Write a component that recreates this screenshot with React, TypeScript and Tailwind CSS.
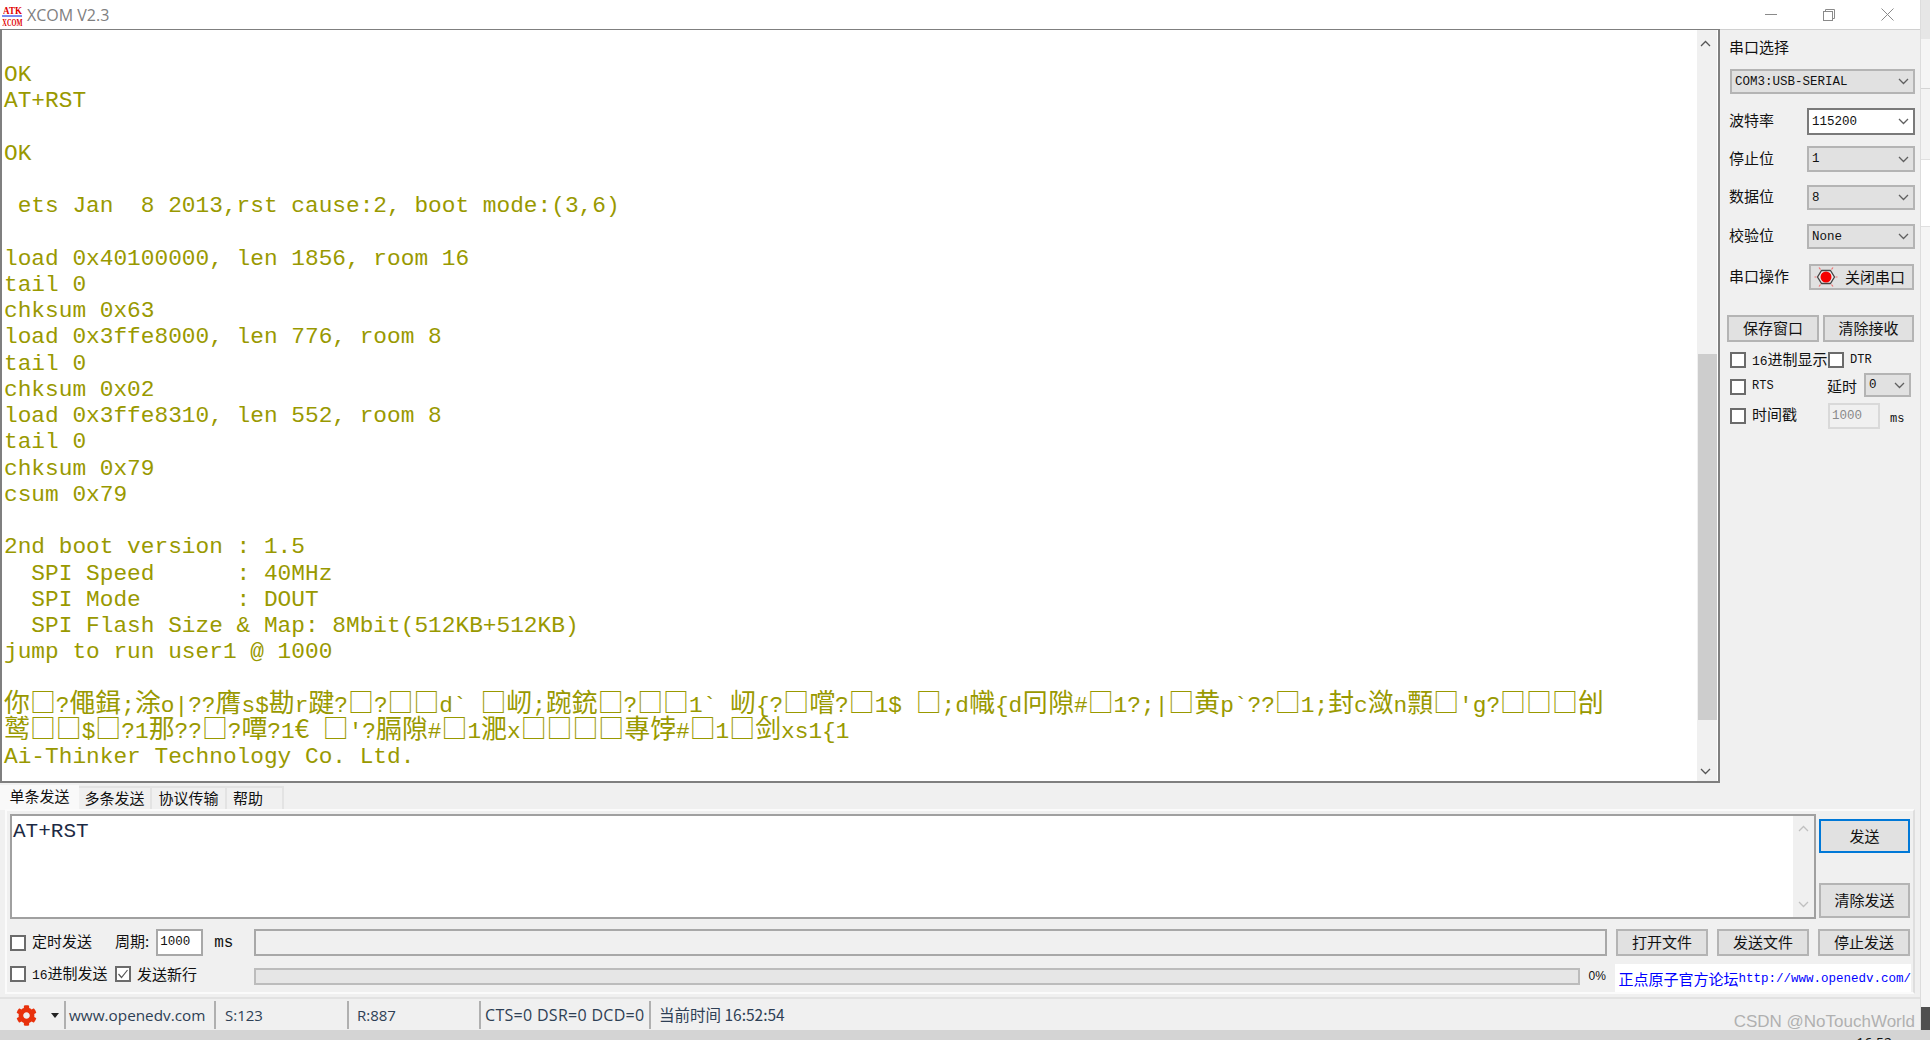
import { FaCog } from 'react-icons/fa';

const cjk = '"Noto Sans CJK SC"';

const termLines = [
  '',
  'OK',
  'AT+RST',
  '',
  'OK',
  '',
  ' ets Jan  8 2013,rst cause:2, boot mode:(3,6)',
  '',
  'load 0x40100000, len 1856, room 16',
  'tail 0',
  'chksum 0x63',
  'load 0x3ffe8000, len 776, room 8',
  'tail 0',
  'chksum 0x02',
  'load 0x3ffe8310, len 552, room 8',
  'tail 0',
  'chksum 0x79',
  'csum 0x79',
  '',
  '2nd boot version : 1.5',
  '  SPI Speed      : 40MHz',
  '  SPI Mode       : DOUT',
  '  SPI Flash Size & Map: 8Mbit(512KB+512KB)',
  'jump to run user1 @ 1000',
  '',
  '你□?僶鍓;涂o|??膺s$勘r踺?□?□□d` □屻;踠銃□?□□1` 屻{?□嚐?□1$ □;d幟{d冋隙#□1?;|□黄p`??□1;封c潋n顠□\'g?□□□刣',
  '鹫□□$□?1那??□?嘾?1€ □\'?膈隙#□1淝x□□□□專饽#□1□剑xs1{1',
  'Ai-Thinker Technology Co. Ltd.',
];

function TermLine({ text }: { text: string }) {
  const runs = text.split(/([^\x00-\x7f]+)/);
  // lines with wide characters sit lower because of the CJK font's metrics
  return (
    <div className={`h-[26.25px] whitespace-pre ${runs.length > 1 ? '-translate-y-[4px]' : ''}`}>
      {runs.map((r, i) =>
        i % 2 === 1 ? (
          <span key={i} className="inline-block font-['Noto_Sans_CJK_SC'] text-[25.9px] leading-[26px]">
            {r}
          </span>
        ) : (
          <span key={i}>{r}</span>
        ),
      )}
    </div>
  );
}

function Chevron({ up, color = '#606060' }: { up?: boolean; color?: string }) {
  return (
    <svg width="11" height="7" viewBox="0 0 11 7" fill="none" className="shrink-0">
      <polyline
        points={up ? '1,6 5.5,1.5 10,6' : '1,1 5.5,5.5 10,1'}
        stroke={color}
        strokeWidth="1.3"
      />
    </svg>
  );
}

function Combo({ value, white, cls }: { value: string; white?: boolean; cls: string }) {
  return (
    <div
      className={`flex items-center justify-between pl-[3px] pr-[4px] border-2 ${
        white ? 'bg-white border-[#7a7a7a]' : 'bg-[#e1e1e1] border-[#b4b4b4]'
      } font-['Liberation_Mono'] text-[12.5px] text-[#111] ${cls}`}
    >
      <span className="mt-[1px]">{value}</span>
      <Chevron />
    </div>
  );
}

function Btn({ label, cls }: { label: string; cls: string }) {
  return (
    <div
      className={`flex items-center justify-center bg-[#e1e1e1] border-2 border-[#b4b4b4] text-[15px] text-[#111] ${cls}`}
    >
      {label}
    </div>
  );
}

function Check({ checked, cls = '' }: { checked?: boolean; cls?: string }) {
  return (
    <div className={`w-[16px] h-[16px] shrink-0 bg-white border-2 border-[#6b6b6b] flex items-center justify-center ${cls}`}>
      {checked && (
        <svg width="12" height="12" viewBox="0 0 12 12" fill="none">
          <polyline points="1.5,6 4.5,9.5 10.5,2" stroke="#555" strokeWidth="1.2" />
        </svg>
      )}
    </div>
  );
}

function PanelRow({ label, children, cls }: { label: string; children: React.ReactNode; cls: string }) {
  return (
    <div className={`flex items-center justify-between text-[15px] text-[#111] ${cls}`}>
      <span className="-ml-[1px] mb-[2px]">{label}</span>
      {children}
    </div>
  );
}

function Logo() {
  return (
    <div className="w-[20px] h-[20px] mt-[2px] ml-[2px] flex flex-col items-center leading-none font-['Liberation_Serif'] font-bold text-[#e00000]">
      <span className="text-[10px] h-[9px] leading-[9px] scale-x-90 whitespace-nowrap">ATK</span>
      <span className="w-full h-[2px] bg-[#7a8cf0] shrink-0"></span>
      <span className="text-[11px] h-[9px] leading-[10px] scale-x-[0.58] whitespace-nowrap">XCOM</span>
    </div>
  );
}

function StatusCell({ text, cls }: { text: string; cls: string }) {
  return (
    <div className={`h-[28px] mt-[1px] flex items-center border-r-2 border-[#b0b0b0] whitespace-pre ${cls}`}>
      {text}
    </div>
  );
}

export default function App() {
  return (
    <div
      className="w-[1930px] h-[1040px] flex flex-col overflow-hidden bg-[#d4d4d4]"
      style={{ fontFamily: `${cjk}, sans-serif` }}
    >
      <div className="flex h-[1030px]">
        {/* window */}
        <div className="w-[1920px] h-full flex flex-col bg-[#f0f0f0]">
          {/* title bar */}
          <div className="h-[29px] shrink-0 bg-white flex items-center">
            <Logo />
            <span className="ml-[5px] font-['Open_Sans'] text-[16px] text-[#808080]">XCOM V2.3</span>
            <div className="ml-auto flex items-center pr-[3px]">
              <div className="w-[58px] h-[29px] flex items-center justify-center">
                <div className="w-[12px] h-px bg-[#8a8a8a]"></div>
              </div>
              <div className="w-[58px] h-[29px] flex items-center justify-center">
                <svg width="12" height="12" viewBox="0 0 12 12" fill="none" stroke="#8a8a8a">
                  <rect x="0.5" y="2.5" width="9" height="9" />
                  <path d="M2.5 2.5V0.5H11.5V9.5H9.5" />
                </svg>
              </div>
              <div className="w-[59px] h-[29px] flex items-center justify-center">
                <svg width="13" height="13" viewBox="0 0 13 13" stroke="#8a8a8a">
                  <path d="M0.5 0.5L12.5 12.5M12.5 0.5L0.5 12.5" />
                </svg>
              </div>
            </div>
          </div>

          {/* terminal + settings */}
          <div className="h-[754px] shrink-0 flex">
            <div className="w-[1720px] shrink-0 flex bg-white border-2 border-[#7f7f7f] border-t-[1.5px]">
              <div className="flex-1 min-w-0 pt-[5.5px] pl-[2px] font-['Liberation_Mono'] text-[22.8px] leading-[26.25px] text-[#999900]">
                {termLines.map((l, i) => (
                  <TermLine key={i} text={l} />
                ))}
              </div>
              <div className="w-[20px] shrink-0 mr-[1px] bg-[#f0f0f0] flex flex-col items-center">
                <div className="h-[26px] pr-[3px] flex items-center justify-center">
                  <Chevron up color="#555" />
                </div>
                <div className="mt-[298px] w-[19px] h-[366px] bg-[#cdcdcd]"></div>
                <div className="mt-auto h-[20px] pr-[3px] flex items-center justify-center">
                  <Chevron color="#555" />
                </div>
              </div>
            </div>

            <div className="flex-1 pl-[10px] pr-[5px] flex flex-col border-t border-[#d0d0d0]">
              <div className="mt-[7px] -ml-[1px] h-[20px] leading-[20px] text-[15px] text-[#111]">串口选择</div>
              <Combo value="COM3:USB-SERIAL" cls="mt-[12px] h-[25px]" />
              <PanelRow label="波特率" cls="mt-[14px] h-[27px]">
                <Combo value="115200" white cls="w-[108px] h-[27px]" />
              </PanelRow>
              <PanelRow label="停止位" cls="mt-[11px] h-[26px]">
                <Combo value="1" cls="w-[108px] h-[26px]" />
              </PanelRow>
              <PanelRow label="数据位" cls="mt-[13px] h-[25px]">
                <Combo value="8" cls="w-[108px] h-[25px]" />
              </PanelRow>
              <PanelRow label="校验位" cls="mt-[14px] h-[25px]">
                <Combo value="None" cls="w-[108px] h-[25px]" />
              </PanelRow>
              <PanelRow label="串口操作" cls="mt-[15px] h-[26px]">
                <div className="w-[105px] h-[26px] mr-[1px] flex items-center bg-[#e1e1e1] border-2 border-[#b4b4b4] text-[15px] text-[#111]">
                  <svg width="24" height="24" viewBox="0 0 24 24" className="ml-[3px] shrink-0">
                    <path d="M7.5 5.5h9l4 6.5-4 6.5h-9l-4-6.5z" fill="#ececec" stroke="#444" strokeWidth="1.4" strokeLinejoin="round" />
                    <circle cx="12" cy="12" r="5.5" fill="#f40000" />
                    <path d="M5 2.5l1.5 2M19 2.5l-1.5 2M0.5 12h2M21.5 12h2M5 21.5l1.5-2M19 21.5l-1.5-2" stroke="#f07070" strokeWidth="1.2" />
                  </svg>
                  <span className="ml-[7px]">关闭串口</span>
                </div>
              </PanelRow>
              <div className="mt-[25px] -ml-[3px] flex gap-[4px]">
                <Btn label="保存窗口" cls="w-[92px] h-[27px]" />
                <Btn label="清除接收" cls="w-[91px] h-[27px]" />
              </div>
              <div className="mt-[10px] h-[16px] flex items-center text-[15px] text-[#111]">
                <Check />
                <span className="ml-[6px] w-[76px] whitespace-nowrap">
                  <span className="font-['Liberation_Mono'] text-[13px]">16</span>进制显示
                </span>
                <Check />
                <span className="ml-[6px] font-['Liberation_Mono'] text-[12px]">DTR</span>
              </div>
              <div className="mt-[5px] h-[24px] flex items-center text-[15px] text-[#111]">
                <Check cls="mt-[4px]" />
                <span className="ml-[6px] mt-[2px] w-[75px] font-['Liberation_Mono'] text-[12px]">RTS</span>
                <span className="w-[37px] mt-[2px]">延时</span>
                <Combo value="0" cls="w-[47px] h-[24px]" />
              </div>
              <div className="mt-[6px] h-[26px] flex items-center text-[15px] text-[#111]">
                <Check />
                <span className="ml-[6px] mb-[3px] w-[76px]">时间戳</span>
                <div className="w-[52px] h-[26px] pl-[2px] flex items-center bg-[#f0f0f0] border-2 border-[#d9d9d9] font-['Liberation_Mono'] text-[12.5px] text-[#8a8a8a]">
                  1000
                </div>
                <span className="ml-[10px] mt-[6px] font-['Liberation_Mono'] text-[12px]">ms</span>
              </div>
            </div>
          </div>

          {/* send tabs */}
          <div className="h-[27px] shrink-0 flex items-end text-[15px] text-[#111]">
            <div className="w-[79px] h-[25px] pb-[2px] flex items-center justify-center bg-[#f9f9f9]">单条发送</div>
            <div className="w-[73px] h-[24px] pb-[1px] flex items-center justify-center border-t-2 border-r-2 border-[#e3e3e3]">多条发送</div>
            <div className="w-[75px] h-[24px] pb-[1px] flex items-center justify-center border-t-2 border-r-2 border-[#e3e3e3]">协议传输</div>
            <div className="w-[57px] h-[24px] pb-[1px] pl-[6px] flex items-center border-t-2 border-r-2 border-[#e3e3e3]">帮助</div>
          </div>

          {/* send panel */}
          <div className="mx-[5px] h-[185px] shrink-0 px-[5px] flex flex-col border-2 border-[#fbfbfb] border-r-[#dedede] -mt-[1px] text-[15px] text-[#111]">
            <div className="mt-[3px] h-[105px] flex gap-[3px] -ml-[2px] -mr-[2px]">
              <div className="flex-1 flex bg-white border-2 border-[#a0a0a0]">
                <div className="flex-1 pl-[1px] pt-[2px] font-['Liberation_Mono'] text-[21px] leading-[28px] text-[#1d2a44]">AT+RST</div>
                <div className="w-[21px] bg-[#f0f0f0] flex flex-col items-center justify-between py-[9px]">
                  <Chevron up color="#c0c0c0" />
                  <Chevron color="#c0c0c0" />
                </div>
              </div>
              <div className="w-[91px] flex flex-col">
                <Btn label="发送" cls="mt-[5px] h-[34px] !border-[#0078d7]" />
                <Btn label="清除发送" cls="mt-auto mb-[1px] h-[35px]" />
              </div>
            </div>

            <div className="mt-[9px] h-[29px] flex items-center -ml-[2px] -mr-[2px]">
              <div className="w-[244px] shrink-0 flex items-center">
                <Check />
                <span className="ml-[6px] mb-[2px] w-[83px]">定时发送</span>
                <span className="mb-[2px]">周期:</span>
                <div className="ml-[7px] w-[47px] h-[27px] pl-[2px] flex items-center bg-white border-2 border-[#a8a8a8] font-['Liberation_Mono'] text-[12.5px]">
                  1000
                </div>
                <span className="ml-[11px] font-['Liberation_Mono'] text-[16px]">ms</span>
              </div>
              <div className="flex-1 h-[27px] bg-[#f0f0f0] border-2 border-[#a8a8a8]"></div>
              <div className="ml-[9px] flex gap-[9px]">
                <Btn label="打开文件" cls="w-[92px] h-[27px]" />
                <Btn label="发送文件" cls="w-[92px] h-[27px]" />
                <Btn label="停止发送" cls="w-[92px] h-[27px]" />
              </div>
            </div>

            <div className="mt-[7px] h-[28px] flex items-center -ml-[2px] -mr-[2px]">
              <div className="w-[244px] shrink-0 mb-[8px] flex items-center">
                <Check />
                <span className="ml-[6px] w-[83px] whitespace-nowrap">
                  <span className="font-['Liberation_Mono'] text-[13px]">16</span>进制发送
                </span>
                <Check checked />
                <span className="ml-[6px]">发送新行</span>
              </div>
              <div className="w-[1329px] h-[17px] mb-[4px] bg-[#e6e6e6] border-2 border-[#bcbcbc]"></div>
              <span className="ml-[9px] mb-[4px] w-[27px] text-[12px] font-['Liberation_Sans']">0%</span>
              <div className="ml-auto w-[296px] h-[28px] pt-[2px] -mr-[1px] pl-[3px] flex items-center bg-white text-[#0000ff] whitespace-nowrap">
                正点原子官方论坛<span className="font-['Liberation_Mono'] text-[12.5px]">http://www.openedv.com/</span>
              </div>
            </div>
          </div>

          {/* status bar */}
          <div className="mt-[3px] h-[33px] flex-1 flex items-center border-t-2 border-[#e2e2e2] font-['Open_Sans'] text-[15px] text-[#2e3f55] relative">
            <div className="w-[66px] h-[28px] mt-[1px] flex items-center border-r-2 border-[#b0b0b0]">
              <FaCog className="ml-[16px] text-[21px] text-[#e8310c]" />
              <svg width="8" height="5" viewBox="0 0 8 5" className="ml-[14px]">
                <path d="M0 0h8L4 5z" fill="#222" />
              </svg>
            </div>
            <StatusCell text="www.openedv.com" cls="w-[150px] pl-[3px] text-[15.3px]" />
            <StatusCell text="S:123" cls="w-[133px] pl-[9px]" />
            <StatusCell text="R:887" cls="w-[132px] pl-[8px]" />
            <StatusCell text="CTS=0 DSR=0 DCD=0" cls="w-[170px] pl-[4px] text-[16px] tracking-[0.3px]" />
            <span className="ml-[8px] text-[15.5px]" style={{ fontFamily: cjk }}>当前时间 16:52:54</span>
            <span className="absolute right-[5px] top-[14px] font-['Liberation_Sans'] text-[17px] leading-[18px] text-[#b0b0b0]">
              CSDN @NoTouchWorld
            </span>
          </div>
        </div>

        {/* desktop strip behind the window */}
        <div className="flex-1 flex flex-col bg-[#f5f5f5] border-l border-[#dcdcdc]">
          <div className="h-[39px] bg-[#e6e6e6]"></div>
          <div className="h-[50px] border-b border-[#d4d4d4]"></div>
          <div className="h-[71px] border-b border-[#e0e0e0] bg-[#f3f3f3]"></div>
          <div className="h-[67px] border-b border-[#e0e0e0] bg-white"></div>
          <div className="flex-1"></div>
          <div className="h-[23px] bg-[#505050]"></div>
        </div>
      </div>

      {/* taskbar clock, cut off at the bottom edge */}
      <div className="h-[10px] flex justify-end pr-[38px] overflow-hidden font-['Open_Sans'] text-[14px] leading-none text-[#111]">
        <span className="pt-[6px]">16:52</span>
      </div>
    </div>
  );
}
